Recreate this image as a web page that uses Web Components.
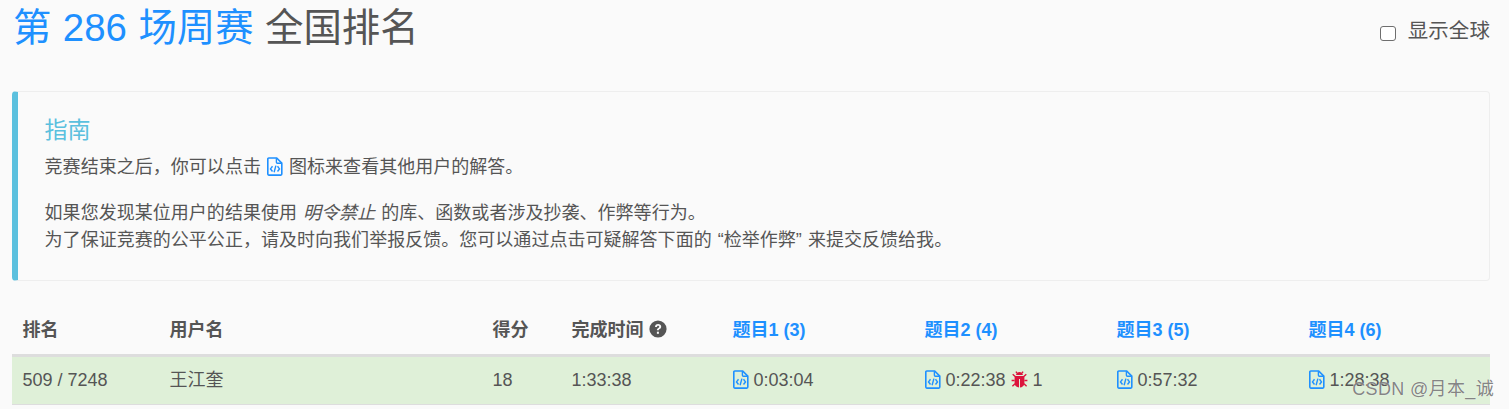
<!DOCTYPE html>
<html lang="zh-CN">
<head>
<meta charset="utf-8">
<title>第 286 场周赛 全国排名</title>
<style>
html,body{margin:0;padding:0;background:#fafafa;}
body{font:18px/25.7px "Liberation Sans","Noto Sans CJK SC",sans-serif;color:#555;height:409px;overflow:hidden;position:relative;}
</style>
</head>
<body>
<template id="t-code"><style>:host{display:inline-block;width:16px;height:19px;vertical-align:-3px;line-height:0}svg{display:block}</style>
<svg width="16" height="19" viewBox="0 0 16 19" fill="none" stroke="#1e90ff"><path d="M1.800 1h7.900l5.100 5.100v11a1 1 0 0 1-1 1H1.800a1 1 0 0 1-1-1V2a1 1 0 0 1 1-1z" stroke-width="1.600"/><path d="M9.400 1.200v4a1 1 0 0 0 1 1h4.200" stroke-width="1.400"/><path d="M5.500 9.300 3.500 11.900l2 2.600M10.500 9.300l2 2.600-2 2.600M8.900 8.600l-1.800 6.600" stroke-width="1.400"/></svg></template>
<template id="t-help"><style>:host{display:inline-block;width:18px;height:18px;vertical-align:-2px;line-height:0}svg{display:block}</style>
<svg width="18" height="18" viewBox="0 0 18 18"><circle cx="9" cy="9" r="8.6" fill="#555"/><path d="M6 7c0-1.900 1.300-3 3.100-3 1.800 0 3.100 1.100 3.100 2.700 0 1.300-.8 1.900-1.600 2.400-.6.4-.8.6-.8 1.200H7.900c0-1.200.4-1.800 1.300-2.400.7-.4 1-.7 1-1.200 0-.6-.5-1-1.100-1-.7 0-1.100.5-1.200 1.300z" fill="#fafafa"/><rect x="7.900" y="11.700" width="2" height="2.100" fill="#fafafa"/></svg></template>
<template id="t-bug"><style>:host{display:inline-block;width:17px;height:17px;vertical-align:-2px;line-height:0}svg{display:block}</style>
<svg width="17" height="17" viewBox="0 0 17 17"><g fill="#dc143c"><path d="M5.100 4.100C5.300 2.200 6.700 1 8.500 1s3.200 1.200 3.400 3.100z"/><path d="M4 5h9l.4 1v6.500C13.100 15 11.200 16.300 9 16.500V8H8v8.500C5.800 16.300 3.900 15 3.600 12.500V6z"/></g><path d="M4.200 5.600 1.700 3.300M12.800 5.600l2.500-2.300M3.600 9.500H.6M13.400 9.500h3M4 12.700l-2.600 2.500M13 12.700l2.600 2.500M6 2 4.900.6M11 2l1.100-1.400" stroke="#dc143c" stroke-width="1.400" fill="none"/></svg></template>

<template id="t-header"><style>
:host{display:flex;justify-content:space-between;height:55px;margin-bottom:36px}
h1{margin:0 0 0 1px;font-size:38.4px;font-weight:400;line-height:55px;color:#555;word-spacing:.8px}
.c{color:#1e90ff}
label{display:flex;align-items:center;gap:12px;font-size:20.48px;line-height:26px;height:26px;margin-top:18px;color:#555;letter-spacing:.1px}
input{appearance:none;box-sizing:border-box;width:16px;height:15px;margin:5px 0 0 0;flex:none;border:1.6px solid #6e6e6e;border-radius:3px;background:#fff}
</style><h1><span class="c"><slot name="contest"></slot></span> <slot name="scope"></slot></h1><label><input type="checkbox"><slot name="toggle"></slot></label></template>

<template id="t-guide"><style>
:host{display:block;box-sizing:border-box;height:190px;border:1px solid #eee;border-left:6px solid #5bc0de;border-radius:4px;padding:24px 26px 0 26.6px}
h4{margin:0 0 10px;font-size:23px;font-weight:400;line-height:28px;color:#5bc0de}
::slotted(p){margin:0 0 19px;line-height:27px;word-spacing:1px;letter-spacing:.03px}
</style><h4><slot name="title"></slot></h4><slot></slot></template>

<template id="t-table"><style>
:host{display:block;margin-top:25px}
</style><slot></slot></template>

<template id="t-row"><style>
:host{display:grid;grid-template-columns:147px 323px 79px 161px 192px 192px 192px 192px;box-sizing:border-box}
:host([head]){border-bottom:3px solid #ddd;height:51px;font-weight:700;align-items:center;padding-top:1px}
:host(:not([head])){height:48px;background:#dff0d8;border-bottom:1px solid #ddd;align-items:center}
</style><slot></slot></template>

<template id="t-cell"><style>
:host{display:block;padding:0 10.5px;white-space:nowrap}
:host([link]){color:#1e90ff;}
</style><slot></slot></template>

<template id="t-mark"><style>
:host{position:absolute;right:15px;top:376px;font-size:18px;line-height:26px;letter-spacing:.35px;color:rgba(100,100,100,.8);text-shadow:0 0 1px #fff;white-space:nowrap}
</style><slot></slot></template>

<template id="t-page"><style>
:host{display:block;padding:0 19px 0 12px}
</style><slot></slot></template>

<rank-page>
  <rank-header>
    <span slot="contest">第 286 场周赛</span>
    <span slot="scope">全国排名</span>
    <span slot="toggle">显示全球</span>
  </rank-header>
  <guide-box>
    <span slot="title">指南</span>
    <p>竞赛结束之后，你可以点击 <code-icon></code-icon> 图标来查看其他用户的解答。</p>
    <p>如果您发现某位用户的结果使用 <em>明令禁止</em> 的库、函数或者涉及抄袭、作弊等行为。<br>为了保证竞赛的公平公正，请及时向我们举报反馈。您可以通过点击可疑解答下面的 “检举作弊” 来提交反馈给我。</p>
  </guide-box>
  <rank-table>
    <rank-row head>
      <rank-cell>排名</rank-cell><rank-cell>用户名</rank-cell><rank-cell>得分</rank-cell>
      <rank-cell>完成时间 <help-icon></help-icon></rank-cell>
      <rank-cell link>题目1 (3)</rank-cell><rank-cell link>题目2 (4)</rank-cell><rank-cell link>题目3 (5)</rank-cell><rank-cell link>题目4 (6)</rank-cell>
    </rank-row>
    <rank-row>
      <rank-cell>509 / 7248</rank-cell><rank-cell>王江奎</rank-cell><rank-cell>18</rank-cell><rank-cell>1:33:38</rank-cell>
      <rank-cell><code-icon></code-icon> 0:03:04</rank-cell>
      <rank-cell><code-icon></code-icon> 0:22:38 <bug-icon></bug-icon> 1</rank-cell>
      <rank-cell><code-icon></code-icon> 0:57:32</rank-cell>
      <rank-cell><code-icon></code-icon> 1:28:38</rank-cell>
    </rank-row>
  </rank-table>
</rank-page>
<csdn-mark>CSDN @月本_诚</csdn-mark>

<script>
const map={'code-icon':'t-code','help-icon':'t-help','bug-icon':'t-bug','rank-header':'t-header','guide-box':'t-guide','rank-table':'t-table','rank-row':'t-row','rank-cell':'t-cell','csdn-mark':'t-mark','rank-page':'t-page'};
for(const [n,id] of Object.entries(map)){
  customElements.define(n,class extends HTMLElement{
    constructor(){super();this.attachShadow({mode:'open'}).appendChild(document.getElementById(id).content.cloneNode(true));}
  });
}
</script>
</body>
</html>
